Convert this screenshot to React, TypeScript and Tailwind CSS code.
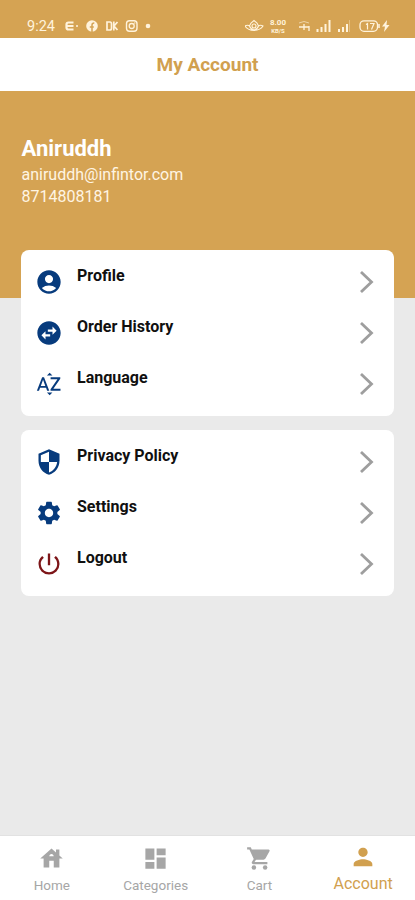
import type { ReactNode } from "react"
import type { IconType } from "react-icons"
import {
    MdAccountCircle,
    MdDashboard,
    MdHouse,
    MdPerson,
    MdPowerSettingsNew,
    MdSecurity,
    MdSettings,
    MdSortByAlpha,
    MdSwapHorizontalCircle,
} from "react-icons/md"

type MenuItem = {
    label: string
    icon: IconType
    color: string
}

const accountItems: MenuItem[] = [
    { label: "Profile", icon: MdAccountCircle, color: "text-[#073b7d]" },
    { label: "Order History", icon: MdSwapHorizontalCircle, color: "text-[#073b7d]" },
    { label: "Language", icon: MdSortByAlpha, color: "text-[#073b7d]" },
]

const appItems: MenuItem[] = [
    { label: "Privacy Policy", icon: MdSecurity, color: "text-[#073b7d]" },
    { label: "Settings", icon: MdSettings, color: "text-[#073b7d]" },
    { label: "Logout", icon: MdPowerSettingsNew, color: "text-[#7d1518]" },
]

const CartIcon = ({ className }: { className?: string }) => (
    <svg className={className} viewBox="0 0 24 24" fill="currentColor">
        <path d="M5.200 4H20a1 1 0 0 1 .88 1.480L17.300 12q-.6 1-1.750 1H8.100L5.200 6z" />
        <path d="M1 3h2.600l4.400 9.500L6.200 15.500q-.3.500.4.500H19" fill="none" stroke="currentColor" strokeWidth="2" />
        <circle cx="7" cy="20" r="2" />
        <circle cx="17" cy="20" r="2" />
    </svg>
)

const tabs = [
    { label: "Home", icon: MdHouse },
    { label: "Categories", icon: MdDashboard },
    { label: "Cart", icon: CartIcon },
    { label: "Account", icon: MdPerson, active: true },
]

const StatusBar = () => (
    <div className="flex h-[38px] items-start pt-[19px] pl-[27px] text-[#fff3dc]">
        <span className="w-[38px] pt-px text-[14.500px] leading-[14px]">9:24</span>
        <svg className="h-[14px] w-[88px]" viewBox="65 19 88 14" fill="none" stroke="currentColor">
            <path d="M73.500 22.500h-5a2 2 0 0 0-2 2v3a2 2 0 0 0 2 2h5M67 26h6.500" strokeWidth="2.200" />
            <circle cx="77" cy="26" r="1" fill="currentColor" stroke="none" />
            <circle cx="92" cy="26" r="5.800" fill="currentColor" stroke="none" />
            <path d="M92 32v-7q0-2 2.300-2M89.800 27h4" stroke="#d5a353" strokeWidth="1.500" />
            <path d="M107 22h3q1.500 0 1.500 2v4q0 2-1.500 2h-3zM113.800 21.500v9M117.500 22l-3.500 4 3.500 4" strokeWidth="1.700" />
            <rect x="126.500" y="20.700" width="10.500" height="10.500" rx="3" strokeWidth="1.400" />
            <circle cx="131.700" cy="26" r="2.500" strokeWidth="1.300" />
            <circle cx="134.800" cy="23" r=".7" fill="currentColor" stroke="none" />
            <circle cx="148" cy="26" r="2.300" fill="currentColor" stroke="none" />
        </svg>
        <div className="ml-[92px] flex">
            <svg className="h-[14px] w-[20px]" viewBox="245 19 20 14" fill="none" stroke="currentColor" strokeWidth="1.100">
                <path d="M245 26q2.500-1.500 4.500 0l1.500-3 3-2.500 3 2.500 1.500 3q2-1.500 4.500 0-2.500 4-9 4.500-6.500-.5-9-4.500zM249.500 26q1 3 4.500 4 3.500-1 4.500-4" />
                <circle cx="254" cy="26" r="2" />
            </svg>
            <div className="-mt-px ml-[3px] w-[20px] text-center font-bold">
                <div className="text-[8px] leading-[9px]">8.00</div>
                <div className="text-[6px] leading-[7px]">KB/S</div>
            </div>
            <svg className="ml-[8px] h-[14px] w-[98px]" viewBox="296 19 98 14" fill="none" stroke="currentColor">
                <path d="M299 23q5-3 10 0" strokeWidth="1" opacity=".6" />
                <path d="M299 27h10.500M304 24v6M309 26v5" strokeWidth="1.300" />
                <path d="M317.500 29v3M321.500 27v5M325.500 24v8M329.500 20v12M339 29v3M343 27v5M347 24v8" strokeWidth="2" />
                <path d="M349.500 20v12" opacity=".35" />
                <rect x="360" y="20.800" width="17.500" height="10.500" rx="4" strokeWidth="1.300" />
                <path d="M379 24v4" strokeWidth="1.500" />
                <path d="M366 24.500l1.500-1v6M370 23.500h4l-2.500 6" strokeWidth="1.200" />
                <path d="M387 20l-5 6.500h3l-1 5.500 5.500-7h-3z" fill="currentColor" stroke="none" />
            </svg>
        </div>
    </div>
)

const MenuRow = ({ item }: { item: MenuItem }) => {
    const Icon = item.icon

    return (
        <button className="flex h-[51px] w-full items-center pl-[14px] pr-[20px] text-left">
            <Icon className={`size-[28px] shrink-0 ${item.color}`} />
            <span className="mb-[12px] ml-[14px] flex-1 whitespace-nowrap text-[16px] font-bold leading-5 text-[#101010]">
                {item.label}
            </span>
            <svg className="h-[24px] w-[15px]" viewBox="0 0 15 24" fill="none" stroke="#9e9e9e" strokeWidth="2.800">
                <path d="M2 2l10.500 10L2 22" />
            </svg>
        </button>
    )
}

const Card = ({ children }: { children: ReactNode }) => (
    <section className="rounded-[8px] bg-white pt-[6.500px] pb-[6.500px]">{children}</section>
)

const App = () => {
    return (
        <div className="flex h-[900px] w-[415px] flex-col overflow-hidden bg-[#eaeaea] font-['Roboto',sans-serif]">
            <div className="bg-[#d5a353]">
                <StatusBar />
            </div>
            <header className="flex h-[53px] items-center justify-center bg-white pt-[2px]">
                <h1 className="text-[19px] font-bold text-[#d1a04f]">My Account</h1>
            </header>

            <div className="h-[207px] shrink-0 bg-[#d5a353] pt-[44px] pl-[21.500px] text-[#fff5e3]">
                <h2 className="text-[22px] font-bold leading-[28px] text-white">Aniruddh</h2>
                <p className="mt-px text-[16px] leading-[22px]">aniruddh@infintor.com</p>
                <p className="text-[16px] leading-[22px]">8714808181</p>
            </div>

            <main className="relative -mt-[48px] flex flex-1 flex-col gap-[14px] pr-[21px] pl-[21px]">
                <Card>
                    {accountItems.map((item) => <MenuRow key={item.label} item={item} />)}
                </Card>
                <Card>
                    {appItems.map((item) => <MenuRow key={item.label} item={item} />)}
                </Card>
            </main>

            <nav className="grid h-[65px] grid-cols-4 border-t border-[#e2e2e2] bg-white">
                {tabs.map(({ label, icon: Icon, active }) => (
                    <div
                        key={label}
                        className={`flex flex-col items-center ${active ? "pt-[7px] text-[#d1a04f]" : "pt-[9px] text-[#a6a6a6]"}`}
                    >
                        <Icon className={active ? "size-[28px]" : "size-[27px]"} />
                        <span className={active ? "mt-[3px] text-[16px] leading-5" : "mt-[3px] text-[13.500px] leading-5"}>
                            {label}
                        </span>
                    </div>
                ))}
            </nav>
        </div>
    )
}

export default App
